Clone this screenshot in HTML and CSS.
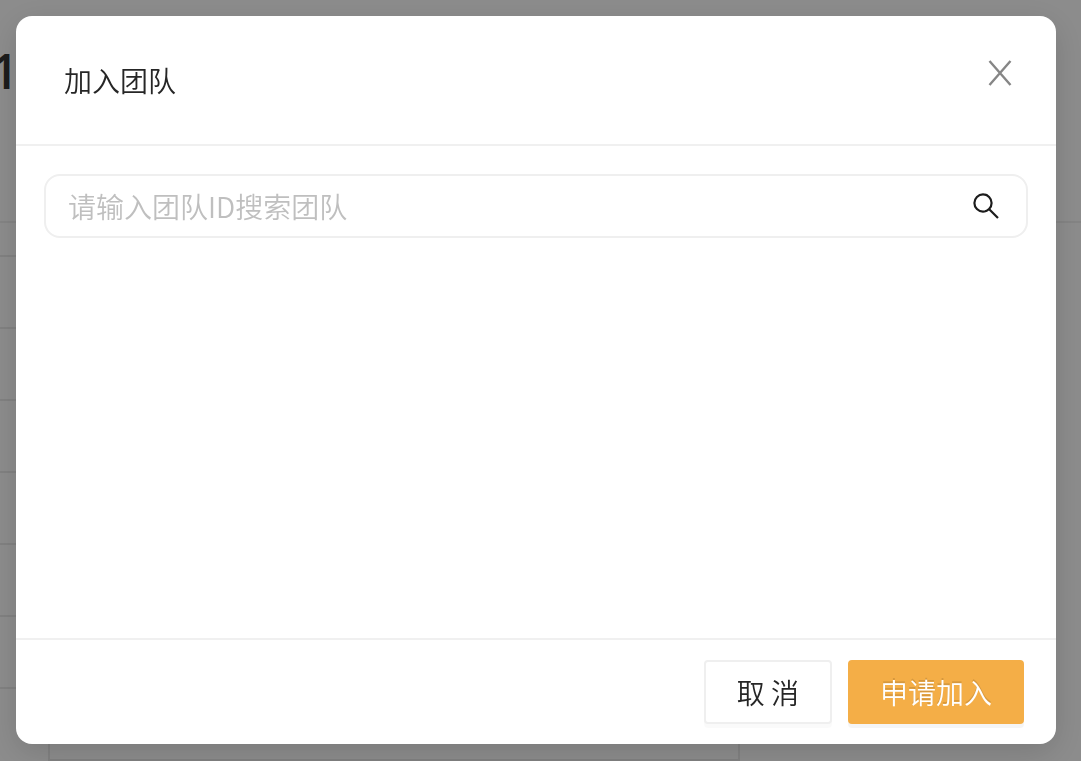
FILE: index.html
```html
<!DOCTYPE html>
<html lang="zh-CN">
<head>
<meta charset="UTF-8" />
<meta name="viewport" content="width=device-width, initial-scale=1.0"/>
<title>加入团队</title>
<link rel="stylesheet" href="styles.css">
</head>
<body>
<main class="page">
  <div class="page-title">1</div>
  <div class="list">
    <div class="row"></div>
    <div class="row"></div>
    <div class="row"></div>
    <div class="row"></div>
    <div class="row"></div>
    <div class="row"></div>
    <div class="row row-split"></div>
  </div>
</main>

<div class="mask">
  <form class="modal" role="dialog" aria-labelledby="modalTitle">
    <header class="modal-header">
      <h1 id="modalTitle">加入团队</h1>
      <button type="button" class="close" aria-label="关闭">
        <svg width="24" height="26" viewBox="0 0 24 26" fill="none" stroke="#868686" stroke-width="2.400">
          <path d="M1.500 1L22.500 25M22.500 1L1.500 25"/>
        </svg>
      </button>
    </header>
    <div class="modal-body">
      <div class="search">
        <input type="text" placeholder="请输入团队ID搜索团队" aria-label="团队ID" />
        <button type="button" class="search-btn" aria-label="搜索">
          <svg width="28" height="28" viewBox="0 0 28 28" fill="none" stroke="#1c1c1c" stroke-width="2.200">
            <circle cx="11" cy="11" r="8.600"/>
            <path d="M17 17L26 26"/>
          </svg>
        </button>
      </div>
    </div>
    <footer class="modal-footer">
      <button type="button" class="btn">取 消</button>
      <button type="button" class="btn btn-primary">申请加入</button>
    </footer>
  </form>
</div>
</body>
</html>
```
FILE: styles.css
```css
* {
  box-sizing: border-box;
}

body {
  margin: 0;
  background: #ffffff;
  color: #262626;
  font-family: "Noto Sans CJK SC", sans-serif;
  font-size: 28px;
  font-weight: 350;
  overflow: hidden;
}

button,
input {
  font: inherit;
  color: inherit;
}

svg {
  display: block;
}

/* Page behind the dialog */
.page {
  height: 100vh;
  overflow: hidden;
}

.page-title {
  height: 223px;
  padding-top: 43px;
  border-bottom: 2px solid #f0f0f0;
  color: #333333;
  font-family: "Open Sans", sans-serif;
  font-size: 48px;
  font-weight: 600;
  line-height: 56px;
  text-indent: -9px;
}

.list {
  width: 740px;
  margin-top: 32px;
  border-top: 2px solid #ebebeb;
}

.row {
  height: 72px;
  border-bottom: 2px solid #ebebeb;
}

.row-split {
  margin-left: 48px;
  border-left: 2px solid #ebebeb;
  border-right: 2px solid #ebebeb;
}

/* Dialog */
.mask {
  position: fixed;
  inset: 0;
  display: flex;
  padding: 16px 25px 17px 16px;
  background: rgba(0, 0, 0, 0.45);
}

.modal {
  flex: 1;
  display: flex;
  flex-direction: column;
  border-radius: 16px;
  background: #ffffff;
  box-shadow: 0 8px 32px rgba(0, 0, 0, 0.14);
}

.modal-header {
  display: flex;
  justify-content: space-between;
  align-items: center;
  padding: 42px 44px 42px 48px;
  border-bottom: 2px solid #f0f0f0;
}

.modal-header h1 {
  margin: 0;
  font-size: 28px;
  font-weight: 350;
  line-height: 44px;
}

.close,
.search-btn {
  padding: 0;
  border: none;
  background: none;
  cursor: pointer;
}

.close {
  align-self: flex-start;
  margin-top: 2px;
}

.modal-body {
  flex: 1;
  padding: 28px;
}

.search {
  display: flex;
  align-items: center;
  height: 64px;
  padding: 0 26px 0 22px;
  border: 2px solid #efefef;
  border-radius: 16px;
}

.search input {
  flex: 1;
  min-width: 0;
  padding: 0;
  border: none;
  outline: none;
  background: none;
}

.search input::placeholder {
  color: #bfbfbf;
  opacity: 1;
}

.modal-footer {
  display: flex;
  justify-content: flex-end;
  gap: 16px;
  padding: 20px 32px;
  border-top: 2px solid #f0f0f0;
}

.btn {
  height: 64px;
  min-width: 128px;
  padding: 0 30px;
  border: 2px solid #efefef;
  border-radius: 4px;
  background: #ffffff;
  line-height: 58px;
  box-shadow: 0 4px 0 rgba(0, 0, 0, 0.02);
  cursor: pointer;
}

.btn-primary {
  border-color: #f4ae47;
  background: #f4ae47;
  color: #ffffff;
  text-shadow: 0 -2px 0 rgba(0, 0, 0, 0.12);
  box-shadow: 0 4px 0 rgba(0, 0, 0, 0.04);
}
```
